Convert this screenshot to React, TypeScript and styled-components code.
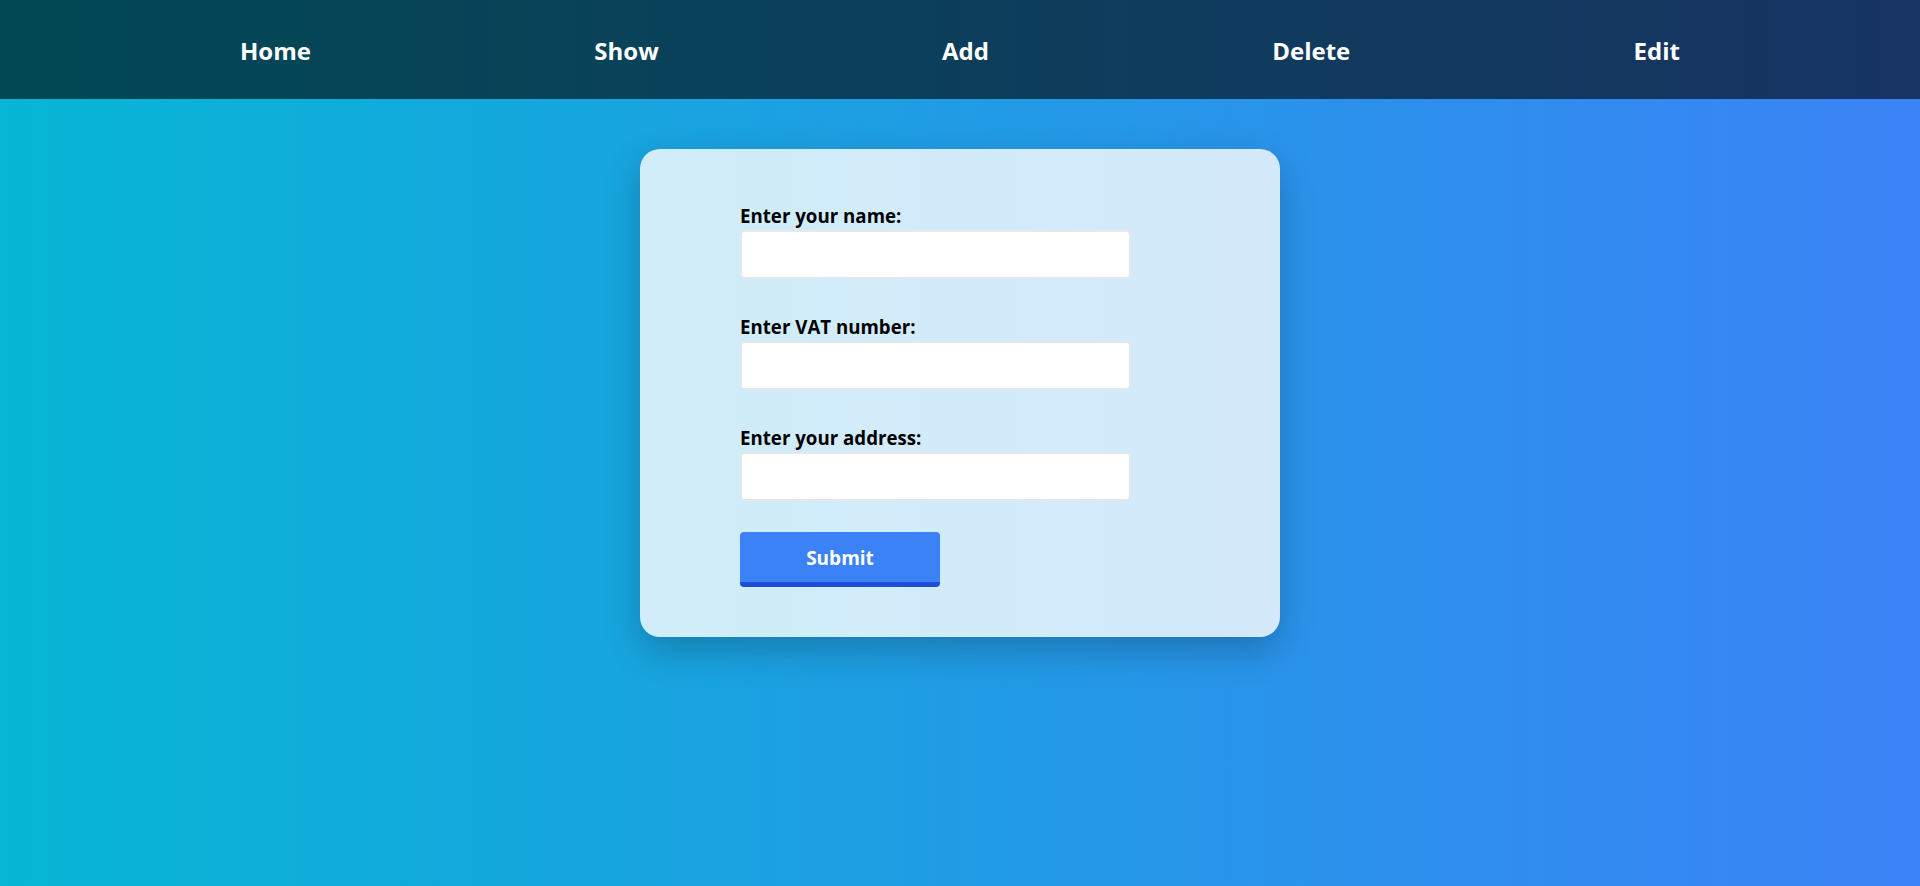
import React from "react";
import styled, { createGlobalStyle } from "styled-components";

const GlobalStyle = createGlobalStyle`
  html, body {
    margin: 0;
    padding: 0;
  }
  body {
    min-height: 100vh;
    font-family: "Open Sans", "Noto Sans", Arial, sans-serif;
    background: linear-gradient(to right, #06b6d4, #3b82f6);
  }
  #root {
    min-height: 100vh;
  }
`;

const Page = styled.div`
  min-height: 100vh;
  display: flex;
  flex-direction: column;
`;

const NavBar = styled.nav`
  height: 99px;
  box-sizing: border-box;
  padding-top: 2px;
  background: rgba(0, 0, 0, 0.6);
  display: flex;
  align-items: center;
`;

const NavList = styled.ul`
  list-style: none;
  margin: 0 auto;
  padding: 0;
  width: 75%;
  display: flex;
  justify-content: space-between;
  align-items: center;
`;

const NavLink = styled.a`
  color: #ffffff;
  text-decoration: none;
  font-weight: 700;
  font-size: 24px;
  line-height: 32px;
  cursor: pointer;
`;

const Main = styled.main`
  display: flex;
  justify-content: center;
  padding-top: 50px;
`;

const Card = styled.form`
  width: 640px;
  box-sizing: border-box;
  padding: 54px 0 50px 100px;
  background: rgba(255, 255, 255, 0.8);
  border-radius: 20px;
  box-shadow: 0 14px 36px rgba(0, 0, 0, 0.22);
  display: flex;
  flex-direction: column;
`;

const Field = styled.div<{ $gap: number }>`
  display: flex;
  flex-direction: column;
  margin-bottom: ${(p) => p.$gap}px;
`;

const Label = styled.label`
  display: block;
  color: #000000;
  font-weight: 700;
  font-size: 18.7px;
  line-height: 26px;
  margin-bottom: 1px;
`;

const Input = styled.input`
  box-sizing: border-box;
  width: 391px;
  height: 49px;
  background: #ffffff;
  border: 2px solid #e5e7eb;
  border-radius: 5px;
  outline: none;
  font-family: inherit;
  font-size: 16px;
  padding: 0 10px;
`;

const SubmitButton = styled.button`
  box-sizing: border-box;
  width: 200px;
  height: 55px;
  background: #3b82f6;
  color: #ffffff;
  border: none;
  border-bottom: 5px solid #1d4ed8;
  border-radius: 4px;
  font-family: inherit;
  font-weight: 700;
  font-size: 19px;
  line-height: 26px;
  padding: 2px 0 0;
  cursor: pointer;
`;

const links = ["Home", "Show", "Add", "Delete", "Edit"];

const fields = [
  { id: "name", label: "Enter your name:" },
  { id: "vat", label: "Enter VAT number:" },
  { id: "address", label: "Enter your address:" },
];

export default function App() {
  return (
    <>
      <GlobalStyle />
      <Page>
        <NavBar>
          <NavList>
            {links.map((l) => (
              <li key={l}>
                <NavLink>{l}</NavLink>
              </li>
            ))}
          </NavList>
        </NavBar>
        <Main>
          <Card onSubmit={(e) => e.preventDefault()}>
            {fields.map((f, i) => (
              <Field key={f.id} $gap={i === fields.length - 1 ? 31 : 35}>
                <Label htmlFor={f.id}>{f.label}</Label>
                <Input id={f.id} type="text" />
              </Field>
            ))}
            <div>
              <SubmitButton type="submit">Submit</SubmitButton>
            </div>
          </Card>
        </Main>
      </Page>
    </>
  );
}
